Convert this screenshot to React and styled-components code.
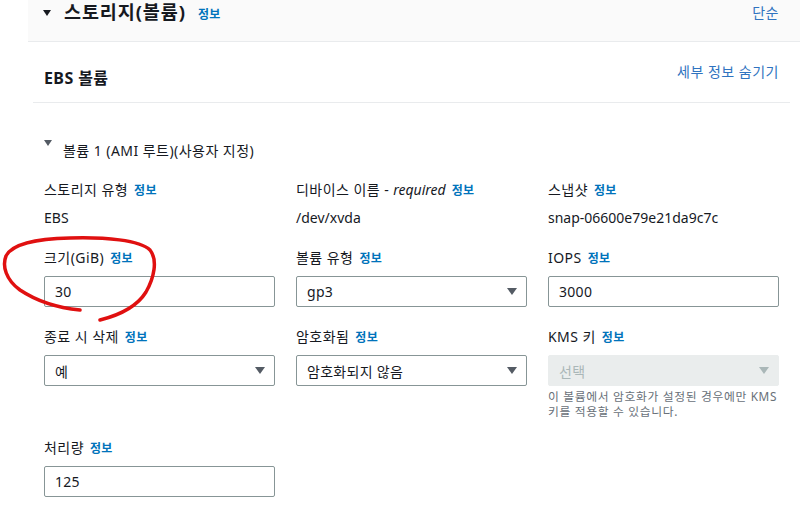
import React from "react";
import styled, { createGlobalStyle } from "styled-components";

const GlobalStyle = createGlobalStyle`
  body {
    margin: 0;
    background: #ffffff;
    font-family: "Noto Sans", "Noto Sans CJK KR", sans-serif;
    color: #16191f;
  }
`;

const Page = styled.div`
  position: relative;
  width: 800px;
  height: 514px;
  overflow: hidden;
  background: #fff;
`;

const Header = styled.div`
  margin-left: 28px;
  height: 42px;
  background: #fafafa;
  border-bottom: 1px solid #e9ebed;
  display: flex;
  justify-content: space-between;
  padding: 0 21px 0 15px;
  box-sizing: border-box;
`;

const HeaderLeft = styled.div`
  display: flex;
  align-items: center;
  height: 26px;
  gap: 13px;
`;

const Caret = styled.span`
  display: inline-block;
  width: 0;
  height: 0;
  border-left: ${(p) => p.size || 4}px solid transparent;
  border-right: ${(p) => p.size || 4}px solid transparent;
  border-top: ${(p) => (p.size || 4) + 2}px solid ${(p) => p.color || "#16191f"};
`;

const Title = styled.h2`
  margin: 0;
  font-size: 18.5px;
  font-weight: 700;
  line-height: 26px;
  letter-spacing: 0.9px;
`;

const Info = styled.a`
  font-size: 12px;
  font-weight: 700;
  color: #0073bb;
  text-decoration: none;
  letter-spacing: 0.3px;
  margin-left: ${(p) => p.gap || 6}px;
`;

const LinkText = styled.a`
  font-size: 14px;
  color: #2f73c0;
  text-decoration: none;
  line-height: 26px;
  letter-spacing: 0.5px;
`;

const Body = styled.div`
  margin-left: 33px;
  width: 757px;
`;

const SubHeader = styled.div`
  display: flex;
  justify-content: space-between;
  align-items: center;
  height: 61px;
  padding: 4px 11px 0;
  box-sizing: border-box;
  border-bottom: 1px solid #e9ebed;
`;

const SubTitle = styled.h3`
  margin: 0;
  font-size: 16px;
  font-weight: 700;
  margin-top: 6px;
  letter-spacing: 0.4px;
`;

const SubLink = styled(LinkText)`
  margin-top: -4px;
`;

const Volume = styled.div`
  padding: 0 11px;
`;

const VolumeToggle = styled.div`
  display: flex;
  align-items: flex-start;
  gap: 11px;
  padding-top: 35px;
  font-size: 14px;
  line-height: 20px;
  letter-spacing: 0.45px;
  & > span:first-child {
    margin-top: 2px;
  }
  & > span:last-child {
    margin-top: 3px;
  }
`;

const Grid = styled.div`
  display: grid;
  grid-template-columns: repeat(3, 231px);
  column-gap: 21px;
  row-gap: 20px;
  margin-top: 19px;
`;

const Field = styled.div`
  display: flex;
  flex-direction: column;
  grid-column: ${(p) => p.col || "auto"};
  margin-top: ${(p) => p.top || 0}px;
`;

const Label = styled.div`
  font-size: 14px;
  line-height: 20px;
  margin-bottom: 7px;
  white-space: nowrap;
  letter-spacing: 0.45px;
  & em {
    font-style: italic;
    letter-spacing: 0;
  }
`;

const Value = styled.div`
  font-size: 14px;
  line-height: 20px;
`;

const Input = styled.div`
  height: 31px;
  box-sizing: border-box;
  border: 1px solid ${(p) => (p.disabled ? "#eaeded" : "#879596")};
  background: ${(p) => (p.disabled ? "#eaeded" : "#fff")};
  color: ${(p) => (p.disabled ? "#aab7b8" : "#16191f")};
  border-radius: 2px;
  display: flex;
  align-items: center;
  justify-content: space-between;
  padding: 0 9px 0 10px;
  font-size: 14px;
  letter-spacing: 0.3px;
`;

const Helper = styled.p`
  margin: 3px 0 0;
  font-size: 11.8px;
  line-height: 15px;
  color: #687078;
  letter-spacing: 0.65px;
  white-space: nowrap;
`;

const Annotation = styled.svg`
  position: absolute;
  left: 0;
  top: 0;
  pointer-events: none;
`;

const Select = ({ value, disabled }) => (
  <Input disabled={disabled}>
    <span>{value}</span>
    <Caret size={5} color={disabled ? "#aab7b8" : "#545b64"} />
  </Input>
);

export default function App() {
  return (
    <Page>
      <GlobalStyle />
      <Header>
        <HeaderLeft>
          <Caret size={4} />
          <Title>
            스토리지(볼륨)
            <Info gap={12}>정보</Info>
          </Title>
        </HeaderLeft>
        <LinkText>단순</LinkText>
      </Header>
      <Body>
        <SubHeader>
          <SubTitle>EBS 볼륨</SubTitle>
          <SubLink>세부 정보 숨기기</SubLink>
        </SubHeader>
        <Volume>
          <VolumeToggle>
            <Caret size={4} color="#545b64" />
            <span>볼륨 1 (AMI 루트)(사용자 지정)</span>
          </VolumeToggle>
          <Grid>
            <Field>
              <Label>
                스토리지 유형<Info>정보</Info>
              </Label>
              <Value>EBS</Value>
            </Field>
            <Field>
              <Label>
                디바이스 이름 - <em>required</em>
                <Info>정보</Info>
              </Label>
              <Value>/dev/xvda</Value>
            </Field>
            <Field>
              <Label>
                스냅샷<Info>정보</Info>
              </Label>
              <Value>snap-06600e79e21da9c7c</Value>
            </Field>

            <Field>
              <Label>
                크기(GiB)<Info>정보</Info>
              </Label>
              <Input>30</Input>
            </Field>
            <Field>
              <Label>
                볼륨 유형<Info>정보</Info>
              </Label>
              <Select value="gp3" />
            </Field>
            <Field>
              <Label>
                IOPS<Info>정보</Info>
              </Label>
              <Input>3000</Input>
            </Field>

            <Field>
              <Label>
                종료 시 삭제<Info>정보</Info>
              </Label>
              <Select value="예" />
            </Field>
            <Field>
              <Label>
                암호화됨<Info>정보</Info>
              </Label>
              <Select value="암호화되지 않음" />
            </Field>
            <Field>
              <Label>
                KMS 키<Info>정보</Info>
              </Label>
              <Select value="선택" disabled />
              <Helper>
                이 볼륨에서 암호화가 설정된 경우에만 KMS
                <br />
                키를 적용할 수 있습니다.
              </Helper>
            </Field>

            <Field col="1" top={-1}>
              <Label>
                처리량<Info>정보</Info>
              </Label>
              <Input>125</Input>
            </Field>
          </Grid>
        </Volume>
      </Body>
      <Annotation width="800" height="514" viewBox="0 0 800 514">
        <path
          d="M80 310 C60 308 38 302 20 290 C6 280 2 266 6 256 C12 244 34 239 70 238 C105 237 140 240 150 250 C158 260 154 278 146 292 C138 305 124 314 100 320"
          fill="none"
          stroke="#e01010"
          strokeWidth="3.5"
          strokeLinecap="round"
        />
      </Annotation>
    </Page>
  );
}
